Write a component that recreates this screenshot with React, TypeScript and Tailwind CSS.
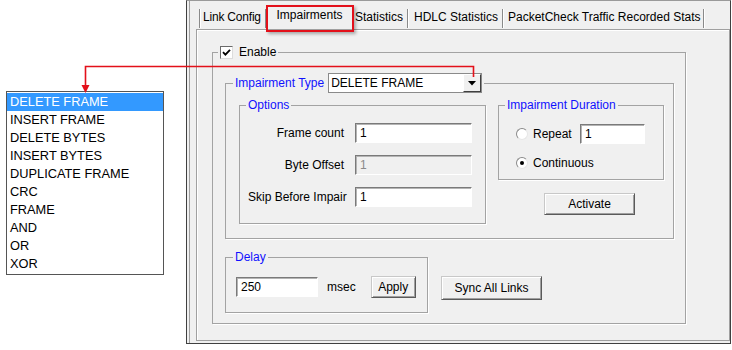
import React from 'react';

const listItems = [
  'DELETE FRAME',
  'INSERT FRAME',
  'DELETE BYTES',
  'INSERT BYTES',
  'DUPLICATE FRAME',
  'CRC',
  'FRAME',
  'AND',
  'OR',
  'XOR',
];

// sunken white edit box, like a classic Win32 text field
function Field({ value, className, disabled }: { value: string; className: string; disabled?: boolean }) {
  return (
    <div
      className={`h-[20px] flex items-center pl-[4px] border border-t-[#7a7a7a] border-l-[#7a7a7a] border-b-white border-r-white shadow-[inset_1px_1px_0_#b4b4b4] ${
        disabled ? 'bg-[#f0f0f0] text-[#8a8a8a]' : 'bg-white text-black'
      } ${className}`}
    >
      {value}
    </div>
  );
}

function Button({ label, className }: { label: string; className: string }) {
  return (
    <div
      className={`flex items-center justify-center bg-[#f0f0f0] border border-t-[#c8c8c8] border-l-[#c8c8c8] border-b-[#5a5a5a] border-r-[#5a5a5a] shadow-[inset_1px_1px_0_#fff,inset_-1px_-1px_0_#a0a0a0] ${className}`}
    >
      {label}
    </div>
  );
}

function Separator() {
  return <div className="w-[2px] h-[19px] self-end mb-[1px] border-l border-[#8a8a8a] bg-white" />;
}

function Radio({ checked }: { checked?: boolean }) {
  return (
    <div className="w-[12px] h-[12px] rounded-full bg-white border border-t-[#8a8a8a] border-l-[#8a8a8a] border-b-[#e6e6e6] border-r-[#e6e6e6] flex items-center justify-center">
      {checked && <div className="w-[4px] h-[4px] rounded-full bg-black" />}
    </div>
  );
}

export default function App() {
  return (
    <div className="relative w-[732px] h-[350px] bg-white flex overflow-hidden font-['Liberation_Sans',Arial,sans-serif] text-[12px] text-black">
      {/* drop-down list shown beside the dialog */}
      <div className="w-[186px] shrink-0">
        <div className="ml-[6px] mt-[91px] w-[158px] border border-[#555] bg-white pt-[1px] pb-[1px] text-[12.8px]">
          {listItems.map((item, i) => (
            <div
              key={item}
              className={`h-[18px] leading-[18px] pl-[3px] whitespace-nowrap ${i === 0 ? 'bg-[#3399ff] text-white' : 'text-black'}`}
            >
              {item}
            </div>
          ))}
        </div>
      </div>

      {/* dialog window */}
      <div className="w-[545px] h-[344px] border border-[#404040] border-t-[#9a9a9a] bg-[#f0f0f0] flex">
        <div className="ml-[2px] border-l border-[#a0a0a0] flex-1 flex flex-col pl-[6px] pb-[2px]">
          {/* tabs */}
          <div className="h-[28px] flex pl-[3px] whitespace-nowrap">
            <Separator />
            <div className="w-[64px] pl-[2px] pt-[4px] flex items-center tracking-[-0.2px]">Link Config</div>
            <Separator />
            <div className="w-[85px] flex items-center justify-center">Impairments</div>
            <div className="w-[55px] pl-[3px] pt-[4px] flex items-center">Statistics</div>
            <Separator />
            <div className="w-[93px] pl-[5px] pt-[4px] flex items-center">HDLC Statistics</div>
            <Separator />
            <div className="w-[199px] pl-[4px] pt-[4px] flex items-center">PacketCheck Traffic Recorded Stats</div>
            <Separator />
          </div>

          {/* tab page */}
          <div className="flex-1 border border-[#a0a0a0] shadow-[inset_1px_1px_0_#fff]">
            <fieldset className="ml-[15px] mt-[15px] w-[474px] border border-[#a3a3a3] shadow-[1px_1px_0_#fff] p-0">
              <legend className="ml-[5px] px-[2px] flex items-center gap-[6px] leading-[14px]">
                <span className="w-[13px] h-[13px] bg-white border border-t-[#6a6a6a] border-l-[#6a6a6a] border-b-[#dcdcdc] border-r-[#dcdcdc] flex items-center justify-center">
                  <svg width="9" height="9" viewBox="0 0 9 9">
                    <path d="M1 4.2 L3.4 6.6 L8 1.8" fill="none" stroke="#000" strokeWidth="1.8" />
                  </svg>
                </span>
                <span>Enable</span>
              </legend>

              <div className="pl-[12px] pt-[14px] pb-[10px]">
                {/* Impairment Type */}
                <fieldset className="w-[449px] border border-[#a3a3a3] shadow-[1px_1px_0_#fff] p-0">
                  <legend className="ml-[7px] px-[2px] flex items-center gap-[4px]">
                    <span className="text-[#1010ff]">Impairment Type</span>
                    <div className="w-[154px] h-[20px] flex bg-white border border-[#8a8a8a]">
                      <div className="flex-1 pl-[2px] flex items-center">DELETE FRAME</div>
                      <div className="w-[18px] bg-[#f0f0f0] border border-t-white border-l-white border-b-[#404040] border-r-[#404040] flex items-center justify-center">
                        <svg width="8" height="5" viewBox="0 0 8 5">
                          <path d="M0 0 H8 L4 4.5 Z" fill="#000" />
                        </svg>
                      </div>
                    </div>
                  </legend>

                  <div className="pl-[13px] pt-[5px] pb-[14px] flex items-start gap-[12px]">
                    {/* Options */}
                    <fieldset className="w-[247px] border border-[#a3a3a3] shadow-[1px_1px_0_#fff] p-0">
                      <legend className="ml-[6px] px-[2px] leading-[14px] text-[#1010ff]">Options</legend>
                      <div className="pl-[8px] pt-[11px] pb-[16px] flex flex-col gap-[12px]">
                        <div className="flex items-center h-[20px]">
                          <span className="w-[96px] text-right">Frame count</span>
                          <Field value="1" className="ml-[11px] w-[117px]" />
                        </div>
                        <div className="flex items-center h-[20px]">
                          <span className="w-[96px] text-right">Byte Offset</span>
                          <Field value="1" className="ml-[11px] w-[117px]" disabled />
                        </div>
                        <div className="flex items-center h-[20px]">
                          <span className="w-[96px] text-right whitespace-nowrap">Skip Before Impair</span>
                          <Field value="1" className="ml-[11px] w-[117px]" />
                        </div>
                      </div>
                    </fieldset>

                    {/* Impairment Duration + Activate */}
                    <div className="w-[166px] flex flex-col">
                      <fieldset className="border border-[#a3a3a3] shadow-[1px_1px_0_#fff] p-0">
                        <legend className="ml-[6px] px-[2px] leading-[14px] text-[#1010ff]">Impairment Duration</legend>
                        <div className="pl-[17px] pt-[12px] pb-[6px] flex flex-col gap-[9px]">
                          <div className="flex items-center h-[20px]">
                            <Radio />
                            <span className="ml-[5px] w-[47px]">Repeat</span>
                            <Field value="1" className="w-[65px]" />
                          </div>
                          <div className="flex items-center h-[20px]">
                            <Radio checked />
                            <span className="ml-[5px]">Continuous</span>
                          </div>
                        </div>
                      </fieldset>
                      <Button label="Activate" className="ml-[46px] mt-[13px] w-[91px] h-[22px]" />
                    </div>
                  </div>
                </fieldset>

                {/* Delay + Sync */}
                <div className="mt-[11px] flex items-start">
                  <fieldset className="w-[203px] border border-[#a3a3a3] shadow-[1px_1px_0_#fff] p-0">
                    <legend className="ml-[7px] px-[2px] leading-[14px] text-[#1010ff]">Delay</legend>
                    <div className="pl-[10px] pt-[12px] pb-[14px] flex items-center">
                      <Field value="250" className="w-[82px]" />
                      <span className="ml-[9px]">msec</span>
                      <Button label="Apply" className="ml-[15px] w-[45px] h-[22px]" />
                    </div>
                  </fieldset>
                  <Button label="Sync All Links" className="ml-[13px] mt-[26px] w-[101px] h-[24px]" />
                </div>
              </div>
            </fieldset>
          </div>
        </div>
      </div>

      {/* annotation: red callout box and connector */}
      <div className="absolute left-[266px] top-[5px] w-[88px] h-[27px] border-2 border-[#e3101a] shadow-[2px_2px_3px_rgba(0,0,0,0.3)] pointer-events-none" />
      <svg className="absolute left-0 top-0 pointer-events-none" width="732" height="350" viewBox="0 0 732 350">
        <path d="M473.5 77 V66.5 H85.5 V86" fill="none" stroke="#e3101a" strokeWidth="1.6" />
        <path d="M81.5 85 H89.5 L85.5 93 Z" fill="#e3101a" />
      </svg>
    </div>
  );
}
